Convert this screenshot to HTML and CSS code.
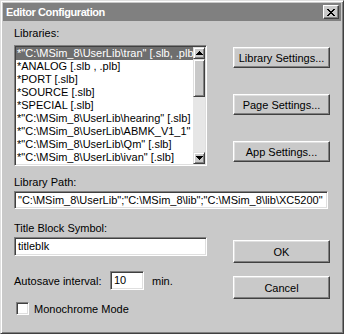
FILE: index.html
```html
<!DOCTYPE html>
<html lang="en">
<head>
  <meta charset="UTF-8" />
  <title>Editor Configuration</title>
  <link rel="stylesheet" href="styles.css">
</head>
<body>
  <div class="window">
    <div class="titlebar">
      <span class="title">Editor Configuration</span>
      <div class="close-btn">
        <svg width="8" height="7" viewBox="0 0 8 7">
          <path d="M0 0h2v1h1v1h2v-1h1v-1h2v1h-1v1h-1v1h-1v1h1v1h1v1h1v1h-2v-1h-1v-1h-2v1h-1v1h-2v-1h1v-1h1v-1h1v-1h-1v-1h-1v-1h-1z" fill="#000"/>
        </svg>
      </div>
    </div>
    <div class="content">
      <div class="top-row">
        <div class="left-col">
          <div class="label">Libraries:</div>
          <div class="listbox">
            <div class="list-items">
              <div class="item selected">*"C:\MSim_8\UserLib\tran" [.slb, .plb]</div>
              <div class="item">*ANALOG [.slb , .plb]</div>
              <div class="item">*PORT [.slb]</div>
              <div class="item">*SOURCE [.slb]</div>
              <div class="item">*SPECIAL [.slb]</div>
              <div class="item">*"C:\MSim_8\UserLib\hearing" [.slb]</div>
              <div class="item">*"C:\MSim_8\UserLib\ABMK_V1_1" [.slb]</div>
              <div class="item">*"C:\MSim_8\UserLib\Qm" [.slb]</div>
              <div class="item">*"C:\MSim_8\UserLib\ivan" [.slb]</div>
            </div>
            <div class="scrollbar">
              <div class="arrow">
                <svg width="7" height="4" viewBox="0 0 7 4"><path d="M3 0h1v1h1v1h1v1h1v1h-7v-1h1v-1h1v-1h1z" fill="#000"/></svg>
              </div>
              <div class="thumb"></div>
              <div class="track"></div>
              <div class="arrow">
                <svg width="7" height="4" viewBox="0 0 7 4"><path d="M0 0h7v1h-1v1h-1v1h-1v1h-1v-1h-1v-1h-1v-1h-1z" fill="#000"/></svg>
              </div>
            </div>
          </div>
        </div>
        <div class="right-col buttons-top">
          <div class="btn">Library Settings...</div>
          <div class="btn">Page Settings...</div>
          <div class="btn">App Settings...</div>
        </div>
      </div>

      <div class="label path-label">Library Path:</div>
      <div class="textbox path-box">"C:\MSim_8\UserLib";"C:\MSim_8\lib";"C:\MSim_8\lib\XC5200"</div>

      <div class="bottom-row">
        <div class="left-col">
          <div class="label title-label">Title Block Symbol:</div>
          <div class="textbox title-box">titleblk</div>
          <div class="autosave-row">
            <span class="autosave-label">Autosave interval:</span>
            <div class="textbox small-box">10</div>
            <span>min.</span>
          </div>
          <div class="check-row">
            <div class="checkbox"></div>
            <span>Monochrome Mode</span>
          </div>
        </div>
        <div class="right-col buttons-bottom">
          <div class="btn big">OK</div>
          <div class="btn big">Cancel</div>
        </div>
      </div>
    </div>
  </div>
</body>
</html>
```

FILE: styles.css
```css
body {
  margin: 0;
  font-family: "Liberation Sans", Arial, sans-serif;
  font-size: 11px;
  color: #000;
  background: #c9c9c9;
}
.window {
  width: 344px;
  height: 334px;
  box-sizing: border-box;
  background: #c9c9c9;
  border: 1px solid;
  border-color: #dfdfdf #404040 #404040 #dfdfdf;
  box-shadow: inset 1px 1px #fff, inset -1px -1px #808080;
  padding: 2px;
}
.titlebar {
  height: 18px;
  background: #808080;
  display: flex;
  align-items: center;
  justify-content: space-between;
  padding: 0 2px 0 3px;
}
.title {
  color: #fff;
  font-weight: bold;
  font-size: 11px;
  letter-spacing: -0.4px;
}
.close-btn {
  width: 16px;
  height: 14px;
  box-sizing: border-box;
  background: #c9c9c9;
  border: 1px solid;
  border-color: #fff #404040 #404040 #fff;
  box-shadow: inset -1px -1px #808080;
  display: flex;
  align-items: center;
  justify-content: center;
}
.content {
  padding: 6px 11px 0 11px;
}
.top-row,
.bottom-row {
  display: flex;
  justify-content: space-between;
}
.left-col {
  width: 193px;
}
.right-col {
  width: 97px;
  display: flex;
  flex-direction: column;
}
.label {
  height: 13px;
  line-height: 13px;
  white-space: nowrap;
}
.listbox {
  margin-top: 5px;
  height: 121px;
  box-sizing: border-box;
  display: flex;
  background: #fff;
  border: 1px solid;
  border-color: #808080 #fff #fff #808080;
  box-shadow: inset 1px 1px #404040, inset -1px -1px #dfdfdf;
  padding: 1px;
  overflow: hidden;
}
.list-items {
  flex: 1;
  overflow: hidden;
}
.item {
  height: 13px;
  line-height: 13px;
  padding-left: 1px;
  white-space: nowrap;
  overflow: hidden;
}
.item.selected {
  background: #6e6e6e;
  color: #fff;
}
.scrollbar {
  width: 12px;
  display: flex;
  flex-direction: column;
  background: #e6e6e6;
}
.arrow,
.thumb {
  box-sizing: border-box;
  background: #c9c9c9;
  border: 1px solid;
  border-color: #dfdfdf #404040 #404040 #dfdfdf;
  box-shadow: inset 1px 1px #fff, inset -1px -1px #808080;
}
.arrow {
  height: 12px;
  display: flex;
  align-items: center;
  justify-content: center;
}
.thumb {
  height: 38px;
}
.track {
  flex: 1;
}
.btn {
  height: 21px;
  box-sizing: border-box;
  background: #c9c9c9;
  border: 1px solid;
  border-color: #fff #404040 #404040 #fff;
  box-shadow: inset -1px -1px #808080, inset 1px 1px #dfdfdf;
  display: flex;
  align-items: center;
  justify-content: center;
  white-space: nowrap;
}
.buttons-top {
  padding-top: 20px;
  gap: 26px;
}
.buttons-bottom {
  padding-top: 31px;
  gap: 13px;
}
.btn.big {
  height: 23px;
}
.textbox {
  box-sizing: border-box;
  background: #fff;
  border: 1px solid;
  border-color: #808080 #fff #fff #808080;
  box-shadow: inset 1px 1px #404040, inset -1px -1px #dfdfdf;
  padding: 0 3px;
  line-height: 16px;
  white-space: nowrap;
  overflow: hidden;
}
.path-label {
  margin-top: 10px;
}
.path-box {
  margin-top: 2px;
  height: 18px;
  width: 314px;
}
.title-label {
  margin-top: 13px;
}
.title-box {
  margin-top: 2px;
  height: 19px;
  line-height: 17px;
}
.autosave-row {
  margin-top: 15px;
  display: flex;
  align-items: center;
  gap: 8px;
  white-space: nowrap;
}
.autosave-label {
  width: 88px;
}
.small-box {
  width: 34px;
  height: 19px;
  line-height: 17px;
}
.check-row {
  margin-top: 12px;
  display: flex;
  align-items: center;
  gap: 5px;
  padding-left: 2px;
  white-space: nowrap;
}
.checkbox {
  width: 13px;
  height: 13px;
  box-sizing: border-box;
  background: #fff;
  border: 1px solid;
  border-color: #808080 #fff #fff #808080;
  box-shadow: inset 1px 1px #404040, inset -1px -1px #dfdfdf;
}
```
